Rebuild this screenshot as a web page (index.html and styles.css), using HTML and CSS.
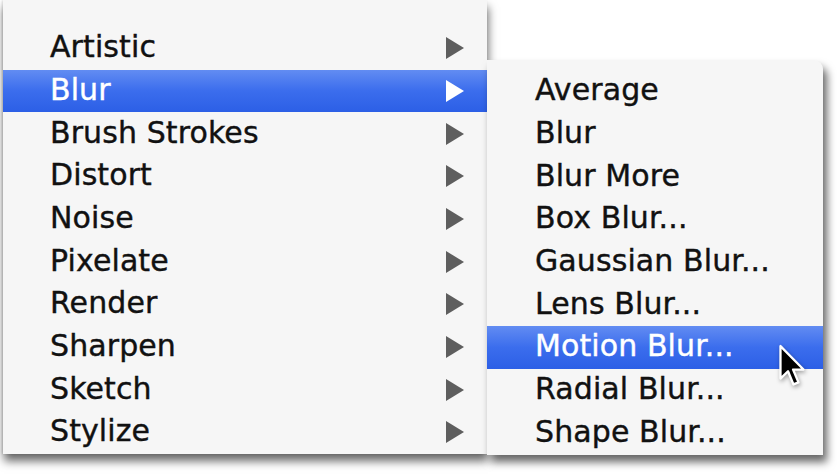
FILE: index.html
```html
<!DOCTYPE html>
<html>
<head>
<meta charset="utf-8">
<link rel="stylesheet" href="styles.css">
</head>
<body>
<div class="stage">
  <div class="menu main">
    <div class="item"><span>Artistic</span><svg class="arrow" viewBox="0 0 18 22"><path d="M0 0 L18 11 L0 22 Z"/></svg></div>
    <div class="item active"><span>Blur</span><svg class="arrow" viewBox="0 0 18 22"><path d="M0 0 L18 11 L0 22 Z"/></svg></div>
    <div class="item"><span>Brush Strokes</span><svg class="arrow" viewBox="0 0 18 22"><path d="M0 0 L18 11 L0 22 Z"/></svg></div>
    <div class="item"><span>Distort</span><svg class="arrow" viewBox="0 0 18 22"><path d="M0 0 L18 11 L0 22 Z"/></svg></div>
    <div class="item"><span>Noise</span><svg class="arrow" viewBox="0 0 18 22"><path d="M0 0 L18 11 L0 22 Z"/></svg></div>
    <div class="item"><span>Pixelate</span><svg class="arrow" viewBox="0 0 18 22"><path d="M0 0 L18 11 L0 22 Z"/></svg></div>
    <div class="item"><span>Render</span><svg class="arrow" viewBox="0 0 18 22"><path d="M0 0 L18 11 L0 22 Z"/></svg></div>
    <div class="item"><span>Sharpen</span><svg class="arrow" viewBox="0 0 18 22"><path d="M0 0 L18 11 L0 22 Z"/></svg></div>
    <div class="item"><span>Sketch</span><svg class="arrow" viewBox="0 0 18 22"><path d="M0 0 L18 11 L0 22 Z"/></svg></div>
    <div class="item"><span>Stylize</span><svg class="arrow" viewBox="0 0 18 22"><path d="M0 0 L18 11 L0 22 Z"/></svg></div>
  </div>
  <div class="menu sub">
    <div class="item"><span>Average</span></div>
    <div class="item"><span>Blur</span></div>
    <div class="item"><span>Blur More</span></div>
    <div class="item"><span>Box Blur...</span></div>
    <div class="item"><span>Gaussian Blur...</span></div>
    <div class="item"><span>Lens Blur...</span></div>
    <div class="item active"><span>Motion Blur...</span>
      <svg class="cursor" viewBox="0 0 13 21"><path d="M1 1 L1 16.5 L4.6 13 L7.2 19.3 L9.6 18.3 L7 12.2 L12 12.2 Z" fill="#000" stroke="#fff" stroke-width="1.1" stroke-linejoin="round"/></svg>
    </div>
    <div class="item"><span>Radial Blur...</span></div>
    <div class="item"><span>Shape Blur...</span></div>
  </div>
</div>
</body>
</html>
```
FILE: styles.css
```css
html, body {
  margin: 0;
  padding: 0;
  background: #ffffff;
}
body {
  width: 840px;
  height: 474px;
  overflow: hidden;
  font-family: "DejaVu Sans", "Liberation Sans", sans-serif;
}
.stage {
  display: flex;
  align-items: flex-start;
  padding-left: 3px;
}
.menu {
  background: #f6f6f6;
  box-sizing: border-box;
}
.main {
  width: 484px;
  padding-top: 27px;
  padding-bottom: 0;
  box-shadow: 1px 7px 9px rgba(0, 0, 0, 0.6), -1px 0 2px rgba(0, 0, 0, 0.12);
}
.sub {
  width: 336px;
  margin-top: 60px;
  padding-top: 10px;
  padding-bottom: 1px;
  border-top-right-radius: 9px;
  box-shadow: 4px 7px 9px rgba(0, 0, 0, 0.6);
  position: relative;
}
.item {
  height: 42.67px;
  display: flex;
  align-items: center;
  justify-content: space-between;
  font-size: 30px;
  letter-spacing: 0.1px;
  color: #111;
  -webkit-text-stroke: 0.4px #111;
}
.main .item {
  padding-left: 47px;
  padding-right: 23px;
}
.sub .item {
  padding-left: 48px;
  position: relative;
}
.item span {
  line-height: 1;
  padding-bottom: 2px;
}
.arrow {
  width: 18px;
  height: 22px;
  fill: #5e5e5e;
}
.item.active {
  background: linear-gradient(#628cf2, #3b6ded 50%, #2c5fe6);
  color: #fff;
  -webkit-text-stroke: 0.4px #fff;
}
.item.active .arrow {
  fill: #ffffff;
}
.cursor {
  position: absolute;
  left: 291px;
  top: 18px;
  width: 28px;
  height: 44px;
  filter: drop-shadow(1px 2px 2px rgba(0, 0, 0, 0.35));
}
```
